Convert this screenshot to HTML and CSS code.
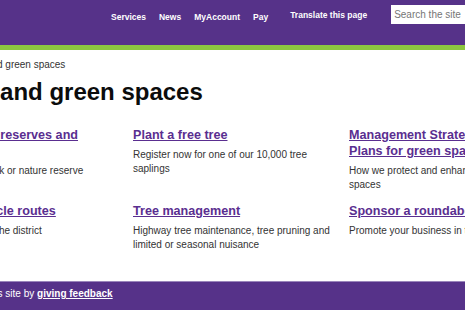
FILE: index.html
```html
<!DOCTYPE html>
<html lang="en">

<head>
    <meta charset="UTF-8">
    <meta name="viewport" content="width=device-width, initial-scale=1.0">
    <title>Parks and green spaces</title>
    <link rel="stylesheet" href="styles.css">
</head>

<body>
    <header class="site-header">
        <div class="header-inner">
            <ul class="main-nav">
                <li><a href="#">Services</a></li>
                <li><a href="#">News</a></li>
                <li><a href="#">MyAccount</a></li>
                <li><a href="#">Pay</a></li>
            </ul>
            <a class="translate" href="#">Translate this page</a>
            <input class="search" type="text" placeholder="Search the site">
        </div>
    </header>

    <main class="container">
        <div class="breadcrumb">
            <a href="#">Home</a><span class="sep">&gt;</span><span>Parks and green spaces</span>
        </div>
        <h1 class="page-title">Parks and green spaces</h1>

        <div class="cards">
            <div class="card">
                <a class="card-title" href="#">Parks, nature reserves and countryside</a>
                <p class="card-text">Find your local park or nature reserve</p>
            </div>
            <div class="card">
                <a class="card-title" href="#">Plant a free tree</a>
                <p class="card-text">Register now for one of our 10,000 tree saplings</p>
            </div>
            <div class="card">
                <a class="card-title" href="#">Management Strategies and Plans for green spaces</a>
                <p class="card-text">How we protect and enhance our green spaces</p>
            </div>
            <div class="card">
                <a class="card-title" href="#">Walks and cycle routes</a>
                <p class="card-text">Walking routes in the district</p>
            </div>
            <div class="card">
                <a class="card-title" href="#">Tree management</a>
                <p class="card-text">Highway tree maintenance, tree pruning and limited or seasonal nuisance</p>
            </div>
            <div class="card">
                <a class="card-title" href="#">Sponsor a roundabout</a>
                <p class="card-text">Promote your business in the district</p>
            </div>
        </div>
    </main>

    <footer class="site-footer">
        <div class="container">
            <p class="feedback">Help us improve this site by <a href="#">giving feedback</a></p>
        </div>
    </footer>
</body>

</html>
```

FILE: styles.css
```css
body {
    margin: 0px;
    padding: 0px;
    overflow-x: hidden;
    font-family: "Liberation Sans", Arial, sans-serif;
    color: #0b0c0c;
    background-color: #ffffff;
}

.site-header {
    height: 45px;
    background-color: #563289;
    border-bottom: 5px solid #8cc63f;
}

.header-inner {
    display: flex;
    align-items: center;
    padding-left: 111px;
    height: 29px;
    white-space: nowrap;
}

.main-nav {
    display: flex;
    flex-shrink: 0;
    gap: 13px;
    margin: 0px;
    padding: 0px;
    list-style: none;
}

.main-nav a,
.translate {
    color: #ffffff;
    font-size: 8.5px;
    font-weight: bold;
    text-decoration: none;
}

.translate {
    flex-shrink: 0;
    margin-left: 22px;
}

.search {
    flex-shrink: 0;
    align-self: flex-start;
    margin: 5px 0px 0px 24px;
    width: 110px;
    height: 19px;
    padding: 0px 3px;
    border: none;
    box-sizing: border-box;
    font-family: "Liberation Sans", Arial, sans-serif;
    font-size: 10px;
}

.search::placeholder {
    color: #767676;
}

.container {
    margin-left: -83px;
    width: 632px;
}

.breadcrumb {
    margin-top: 8px;
    font-size: 10px;
    line-height: 14px;
    color: #333333;
}

.breadcrumb a {
    color: #1d4f9c;
}

.sep {
    margin: 0px 4px;
}

.page-title {
    margin: 6px 0px 0px 11px;
    font-size: 24px;
    line-height: 28px;
    font-weight: bold;
}

.cards {
    display: grid;
    grid-template-columns: repeat(3, 200px);
    column-gap: 16px;
    row-gap: 12px;
    margin-top: 21px;
}

.card-title {
    display: block;
    font-size: 12.6px;
    line-height: 16px;
    font-weight: bold;
    color: #5a2e90;
    text-decoration: underline;
    text-decoration-thickness: 1px;
}

.card-text {
    margin: 5px 0px 0px;
    font-size: 10px;
    line-height: 13.5px;
    color: #333333;
}

.site-footer {
    margin-top: 30px;
    background-color: #563289;
    border-top: 1px solid #9a86bb;
    padding: 5px 0px 20px;
}

.feedback {
    margin: 0px 0px 0px -5px;
    font-size: 10px;
    line-height: 14px;
    color: #ffffff;
}

.feedback a {
    color: #ffffff;
    font-weight: bold;
}
```
